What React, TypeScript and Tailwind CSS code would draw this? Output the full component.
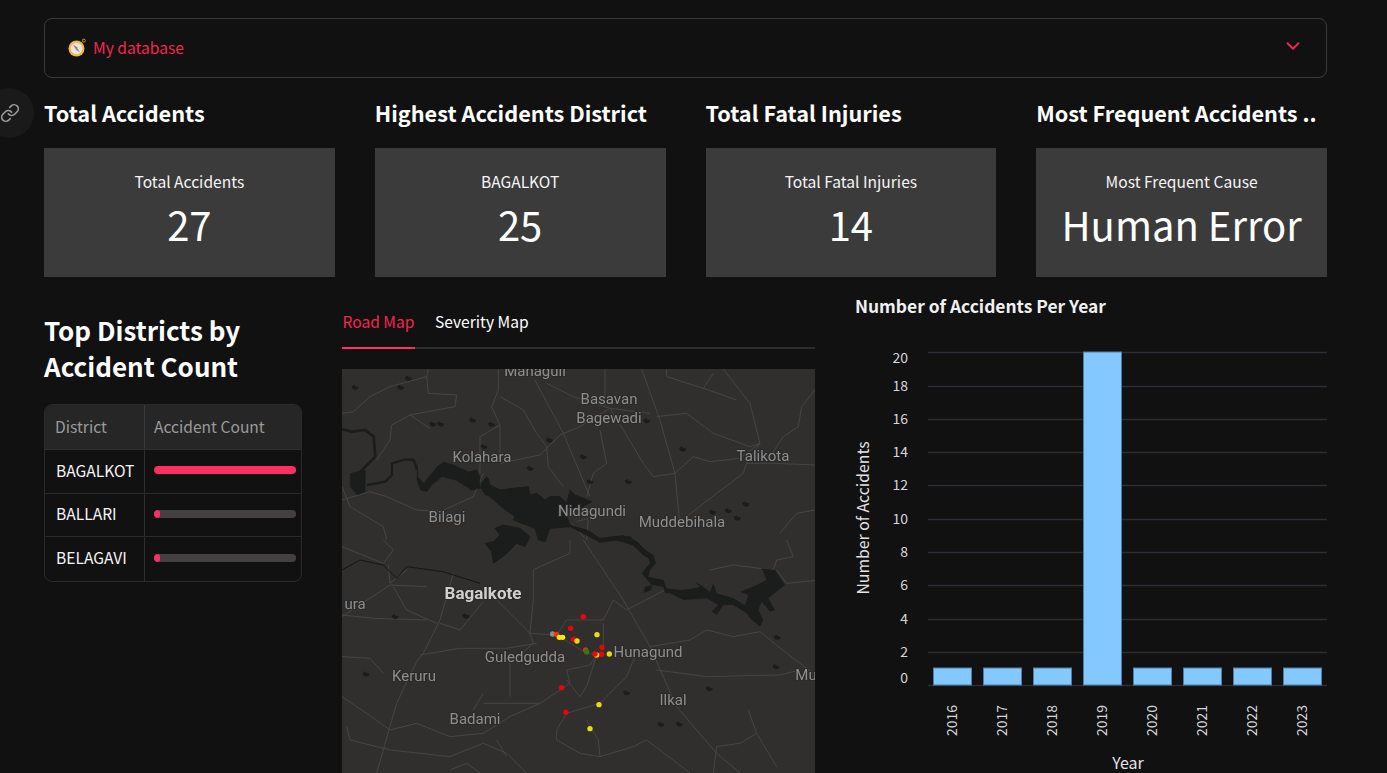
import { ChevronDown, Link } from 'lucide-react';

const FONT = '"Noto Sans CJK SC", "Noto Sans", sans-serif';
const MAP_FONT = 'Roboto, "Liberation Sans", sans-serif';

const metrics = [
  { title: 'Total Accidents', label: 'Total Accidents', value: '27' },
  { title: 'Highest Accidents District', label: 'BAGALKOT', value: '25' },
  { title: 'Total Fatal Injuries', label: 'Total Fatal Injuries', value: '14' },
  { title: 'Most Frequent Accidents ..', label: 'Most Frequent Cause', value: 'Human Error' },
];

const districts = [
  { name: 'BAGALKOT', pct: 100 },
  { name: 'BALLARI', pct: 4 },
  { name: 'BELAGAVI', pct: 4 },
];

// coordinates below are in 3x crop space, the groups scale them back down
const roadsTop = [
  'M6 340L40 335 90 290 150 260 260 230 265 207',
  'M260 230L265 280 350 285 345 320 210 345 155 375 150 420 110 480',
  'M210 345L270 385',
  'M475 207L475 270 455 320 480 375 420 410 420 520',
  'M480 290L550 330 590 400 620 440 625 500 670 560',
  'M585 240L670 400 750 590',
  'M620 250L700 290 810 325 930 340',
  'M905 207L960 360 1005 520 1020 680',
  'M480 490L600 465 660 405 720 380 810 325',
  'M810 325L850 390 910 490 940 530 1005 520 1060 470 1110 485 1200 475 1260 430',
  'M950 350L1040 340 1120 400 1230 440 1260 430',
  'M1150 207L1230 310 1260 430 1220 490 1210 520 1130 580 1040 650',
  'M1220 490L1300 490 1425 495',
  'M1425 270L1385 320 1375 380 1330 410 1290 470',
  'M6 600L90 575 140 590 230 630 300 635 400 590 430 520',
  'M980 207L980 230 1090 265 1190 300M1090 265L1120 220',
  'M1425 630L1370 640 1320 700',
  'M780 390L800 490 760 520 740 590',
  'M480 375L480 470',
  'M795 207L795 320',
  'M6 560L30 620 130 680 140 720',
  'M710 665L745 655 740 720M695 670L735 715',
];

const roadsBottom = [
  'M6 20L130 70 160 30 130 0M145 75L150 130 200 90',
  'M6 230L150 135 260 140',
  'M160 140L200 210 290 250',
  'M6 225L100 235 260 240',
  'M430 185L360 270 300 250',
  'M340 100L300 240 250 340 230 365 170 490 110 699',
  'M240 345L360 325 500 325 590 310',
  'M6 350L90 355 130 400',
  'M470 180L570 280 640 285',
  'M580 90L580 180 570 280 580 310 510 370 510 470',
  'M690 0L690 40 600 80 580 90',
  'M730 0L850 180 930 320 1010 500 1070 570 1130 640 1200 699',
  'M680 240L790 240 820 180 860 210 975 150',
  'M680 240L650 285',
  'M650 285L740 340 770 345',
  'M790 250L790 330 770 345 750 375 680 390 690 430 600 490 430 490',
  'M770 345L740 440 720 470 680 420',
  'M885 350L860 410 780 490 680 520 650 570 650 600 720 640 780 650 880 620 920 600 1050 699',
  'M780 650L775 600 740 540',
  'M930 320L1050 300 1100 270 1180 290 1260 275 1340 340 1420 400',
  'M950 390L1100 410 1320 405 1380 390',
  'M6 470L80 520 150 570 230 550 330 590 430 580 510 530 600 490',
  'M20 560L30 600 150 630 330 650 430 610 500 640 560 699',
  'M470 600L500 650',
  'M1250 580L1200 610 1130 620 1120 699',
  'M1250 580L1310 680M1225 510L1250 580',
  'M330 690L380 670 420 699',
  'M1340 0L1360 50 1310 60 1300 90M1310 90L1340 130 1440 120',
  'M430 460L400 510',
  'M1110 90L1180 75 1300 90',
];

const lakesTop = [
  [205, 235], [45, 262], [182, 262], [278, 372], [302, 372], [398, 360], [455, 373], [628, 420], [730, 470], [570, 505],
  [432, 440], [1028, 447], [865, 545], [750, 545], [1118, 636], [1165, 632], [1192, 654], [1218, 612], [920, 362],
];

const lakesBottom = [[165, 230], [378, 228], [78, 402], [860, 458], [963, 553], [1018, 552], [1108, 446], [1308, 380], [1312, 292]];

const LAKE = 'M-11 -2L-3 -8 2 -3 10 -2 9 5 0 8 -7 5Z';

const labels = [
  { x: 535, y: 376, text: 'Managuli' },
  { x: 609, y: 404, text: 'Basavan' },
  { x: 609, y: 423, text: 'Bagewadi' },
  { x: 482, y: 462, text: 'Kolahara' },
  { x: 763, y: 461, text: 'Talikota' },
  { x: 447, y: 522, text: 'Bilagi' },
  { x: 592, y: 516, text: 'Nidagundi' },
  { x: 682, y: 527, text: 'Muddebihala' },
  { x: 355, y: 609, text: 'ura' },
  { x: 525, y: 662, text: 'Guledgudda' },
  { x: 648, y: 657, text: 'Hunagund' },
  { x: 414, y: 681, text: 'Keruru' },
  { x: 475, y: 724, text: 'Badami' },
  { x: 673, y: 705, text: 'Ilkal' },
  { x: 806, y: 680, text: 'Mu' },
];

const dots = [
  { x: 638, y: 282, c: '#8c8c8c' },
  { x: 737, y: 330, c: '#d8321a' },
  { x: 740, y: 336, c: '#2f7a12' },
  { x: 730, y: 230, c: '#ff0000' },
  { x: 692, y: 265, c: '#f00000' },
  { x: 700, y: 298, c: '#f00000' },
  { x: 786, y: 322, c: '#f00000' },
  { x: 785, y: 343, c: '#f00000' },
  { x: 650, y: 283, c: '#ff3000' },
  { x: 665, y: 443, c: '#f00000' },
  { x: 678, y: 517, c: '#f00000' },
  { x: 771, y: 284, c: '#e8dc10' },
  { x: 711, y: 303, c: '#ffd800' },
  { x: 658, y: 292, c: '#ffe600' },
  { x: 668, y: 292, c: '#ffe600' },
  { x: 808, y: 342, c: '#e8dc10' },
  { x: 777, y: 494, c: '#e8dc10' },
  { x: 750, y: 566, c: '#e8dc10' },
  { x: 770, y: 345, c: '#ffc800' },
  { x: 765, y: 342, c: '#ff0000' },
];

function RoadMap() {
  return (
    <svg
      viewBox="342 369 473 404"
      className="block h-[404px] w-full bg-[#302f2e] blur-[0.3px]"
      style={{ fontFamily: MAP_FONT }}
    >
      <g transform="translate(340 300) scale(0.3333)" fill="none" stroke="#454545" strokeWidth="3" strokeLinejoin="round">
        {roadsTop.map((d, i) => <path key={i} d={d} />)}
      </g>
      <g transform="translate(340 540) scale(0.3333)" fill="none" stroke="#454545" strokeWidth="3" strokeLinejoin="round">
        {roadsBottom.map((d, i) => <path key={i} d={d} />)}
        <path d="M6 90L60 60 130 75 170 115 200 80 310 95 340 105 420 130" stroke="#151515" />
      </g>

      {/* reservoir, west arm */}
      <g transform="translate(342 420) scale(0.3333)" fill="#1b1d1d" stroke="#1b1d1d" strokeLinejoin="round">
        <path fill="none" strokeWidth="8" d="M0 28L30 35 70 30 95 50 100 110 60 150 50 165" />
        <path d="M25 160L70 150 70 215 45 225 25 200Z" />
        <path fill="none" strokeWidth="7" d="M75 195L130 185 150 165 150 130 190 118 215 120 225 150" />
        <path d="M225 130L228 170 245 190 265 165 285 140 305 125 335 135 380 155 410 165 415 205 390 210 340 180 300 170 270 195 255 215 235 210 225 180Z" />
        <path d="M415 200L440 175 450 230 430 225Z" />
      </g>
      {/* reservoir, main body */}
      <g transform="translate(470 465) scale(0.3333)" fill="#1b1d1d" stroke="#1b1d1d" strokeWidth="3" strokeLinejoin="round">
        <path d="M35 55L50 35 60 60 90 75 130 70 175 65 180 90 200 85 225 105 240 95 270 95 290 115 300 75 315 90 365 110 330 130 280 130 300 180 330 190 350 195 390 220 460 212 500 230 540 270 540 280 520 270 490 240 440 225 390 232 340 205 300 185 240 190 225 230 205 225 195 190 130 165 135 155 100 130 60 95 35 70Z" />
        <path d="M75 190L100 180 150 190 180 215 165 245 140 235 105 270 70 295 65 260 45 235 70 230 90 210Z" />
        <path d="M0 20L20 15 30 40 20 70 0 75Z" />
      </g>
      {/* reservoir, east arm */}
      <g transform="translate(620 530) scale(0.3333)" fill="#1b1d1d">
        <path d="M0 20L30 18 60 50 100 75 108 100 90 120 85 140 130 150 140 175 185 180 225 175 240 170 225 155 250 170 270 185 280 160 290 190 340 205 375 225 385 195 360 185 410 165 440 150 425 115 465 120 495 165 445 205 465 240 450 245 425 215 415 240 430 270 420 290 390 265 380 250 340 225 310 225 290 255 275 245 295 225 260 205 190 210 150 190 135 190 130 170 95 165 65 130 90 100 85 80 50 55 25 30 0 30Z" />
        <path d="M75 170L95 165 95 180 70 190Z" />
      </g>
      <g transform="translate(340 300) scale(0.3333)" fill="#1b1d1d">
        {lakesTop.map(([x, y], i) => <path key={i} d={LAKE} transform={`translate(${x} ${y})`} />)}
      </g>
      <g transform="translate(340 540) scale(0.3333)" fill="#1b1d1d">
        {lakesBottom.map(([x, y], i) => <path key={i} d={LAKE} transform={`translate(${x} ${y})`} />)}
      </g>

      <g fontSize="15" fill="#8e8e8e" textAnchor="middle" stroke="#2a2a2a" strokeWidth="2" paintOrder="stroke">
        {labels.map((l) => (
          <text key={l.text} x={l.x} y={l.y}>
            {l.text}
          </text>
        ))}
      </g>
      <text
        x="483"
        y="599"
        fontSize="17"
        fontWeight="700"
        fill="#cfcfcf"
        textAnchor="middle"
        stroke="#2a2a2a"
        strokeWidth="2"
        paintOrder="stroke"
      >
        Bagalkote
      </text>

      <g transform="translate(340 540) scale(0.3333)">
        {dots.map((p, i) => <circle key={i} cx={p.x} cy={p.y} r="8" fill={p.c} />)}
      </g>
    </svg>
  );
}

const gridY = [352, 386, 419, 452, 485, 519, 552, 585, 619, 652, 685];
const tickLabels = [
  { y: 363, v: '20' },
  { y: 391, v: '18' },
  { y: 424, v: '16' },
  { y: 457, v: '14' },
  { y: 490, v: '12' },
  { y: 524, v: '10' },
  { y: 557, v: '8' },
  { y: 590, v: '6' },
  { y: 624, v: '4' },
  { y: 657, v: '2' },
  { y: 683, v: '0' },
];
const years = [2016, 2017, 2018, 2019, 2020, 2021, 2022, 2023];

function YearChart() {
  return (
    <svg viewBox="855 329 472 444" className="block h-[444px] w-[472px]" style={{ fontFamily: FONT }}>
      {gridY.map((y) => (
        <line key={y} x1="928" x2="1327" y1={y + 0.5} y2={y + 0.5} stroke="#2d2d3a" strokeWidth="1.5" />
      ))}
      {tickLabels.map((t) => (
        <text key={t.v} x="908" y={t.y} fontSize="14" fill="#d6d6d9" textAnchor="end">
          {t.v}
        </text>
      ))}
      {years.map((year, i) => {
        const x = 933.5 + i * 50;
        const top = year === 2019 ? 352 : 668;
        return (
          <g key={year}>
            <rect x={x} y={top} width="38" height={685 - top} fill="#83c9ff" stroke="#4a7ea6" strokeWidth="1" />
            <text
              transform={`translate(${x + 23} 705) rotate(-90)`}
              fontSize="14"
              fill="#d6d6d9"
              textAnchor="end"
            >
              {year}
            </text>
          </g>
        );
      })}
      <text x="1128" y="769" fontSize="16" fill="#e4e4e6" textAnchor="middle">
        Year
      </text>
      <text transform="translate(869 518) rotate(-90)" fontSize="15.8" fill="#e4e4e6" textAnchor="middle">
        Number of Accidents
      </text>
    </svg>
  );
}

function CompassIcon() {
  return (
    <svg width="19" height="19" viewBox="0 0 19 19">
      <circle cx="15.8" cy="2.6" r="1.5" fill="none" stroke="#c9962f" strokeWidth="1" />
      <circle cx="8.5" cy="10.5" r="8" fill="#f4b93a" />
      <circle cx="8.5" cy="10.5" r="5.8" fill="#e6e6ea" />
      <path d="M5 6.5L9.6 9.8 8 11.5Z" fill="#e8456b" />
      <path d="M12 14.5L7.4 11.2 9 9.5Z" fill="#8a8a92" />
    </svg>
  );
}

export default function App() {
  return (
    <div
      className="relative h-[773px] overflow-hidden bg-[#111111] pl-[44px] pr-[60px] pt-[18px] text-white"
      style={{ fontFamily: FONT }}
    >
      {/* page anchor button */}
      <div className="absolute left-[-16px] top-[88px] flex h-[50px] w-[50px] items-center justify-center rounded-full bg-[#1a1a1a]">
        <Link size={20} strokeWidth={2} className="ml-[2px] text-[#9a9a9a]" />
      </div>

      <div className="flex h-[60px] items-center justify-between rounded-lg border border-[#3a3a3e] pl-[23px] pr-[22px]">
        <div className="flex items-center gap-[6px] text-[15.6px] text-[#f5264f]">
          <CompassIcon />
          <span>My database</span>
        </div>
        <ChevronDown size={22} strokeWidth={2} className="mb-[4px] text-[#f5264f]" />
      </div>

      <div className="mt-[14px] grid grid-cols-4 gap-10">
        {metrics.map((m) => (
          <div key={m.title}>
            <h3 className="h-[56px] whitespace-nowrap text-[21.7px] font-semibold leading-[42px]">{m.title}</h3>
            <div className="flex h-[129px] flex-col items-center bg-[#3b3b3b] pt-[23px]">
              <div className="text-[15.6px] leading-[20px] text-[#f5f5f5]">{m.label}</div>
              <div className="mt-[5px] text-[40px] leading-[56px]">{m.value}</div>
            </div>
          </div>
        ))}
      </div>

      <div className="mt-[18px] grid grid-cols-[258px_473px_472px] gap-10">
        <div className="pt-[17px]">
          <h2 className="text-[26px] font-semibold leading-[36px]">
            Top Districts by
            <br />
            Accident Count
          </h2>
          <div className="mt-[20px] overflow-hidden rounded-lg border border-[#2a2a2a] text-[15.6px]">
            <div className="flex h-[45px] border-b border-[#2e2e2e] bg-[#262626] text-[#9a9a9a]">
              <div className="flex w-[100px] items-center border-r border-[#3a3a3a] pl-[10px]">District</div>
              <div className="flex flex-1 items-center pl-[9px]">Accident Count</div>
            </div>
            {districts.map((d, i) => (
              <div key={d.name} className={`flex h-[43.6px] ${i < 2 ? 'border-b border-[#2a2a2a]' : ''}`}>
                <div className="flex w-[100px] items-center border-r border-[#2e2e2e] pb-[2px] pl-[11px] text-[#f5f5f5]">
                  {d.name}
                </div>
                <div className="flex flex-1 items-center pb-[2px] pl-[9px] pr-[5px]">
                  <div className="h-[8px] w-full overflow-hidden rounded-full bg-[#453f41]">
                    <div className="h-full rounded-full bg-[#ff2e63]" style={{ width: `${d.pct}%` }} />
                  </div>
                </div>
              </div>
            ))}
          </div>
        </div>

        <div>
          <div className="flex h-[54px] gap-5 border-b-2 border-[#2b2b33] text-[15.6px]">
            <div className="-mb-[2px] flex w-[73px] items-center justify-center whitespace-nowrap border-b-2 border-[#ff2e63] pt-[2px] text-[#f5264f]">
              Road Map
            </div>
            <div className="flex items-center pt-[2px]">Severity Map</div>
          </div>
          <div className="mt-[20px] overflow-hidden">
            <RoadMap />
          </div>
        </div>

        <div>
          <div className="text-[17.4px] font-semibold leading-[22px] text-[#f0f0f0]">Number of Accidents Per Year</div>
          <div className="mt-[12px]">
            <YearChart />
          </div>
        </div>
      </div>
    </div>
  );
}
